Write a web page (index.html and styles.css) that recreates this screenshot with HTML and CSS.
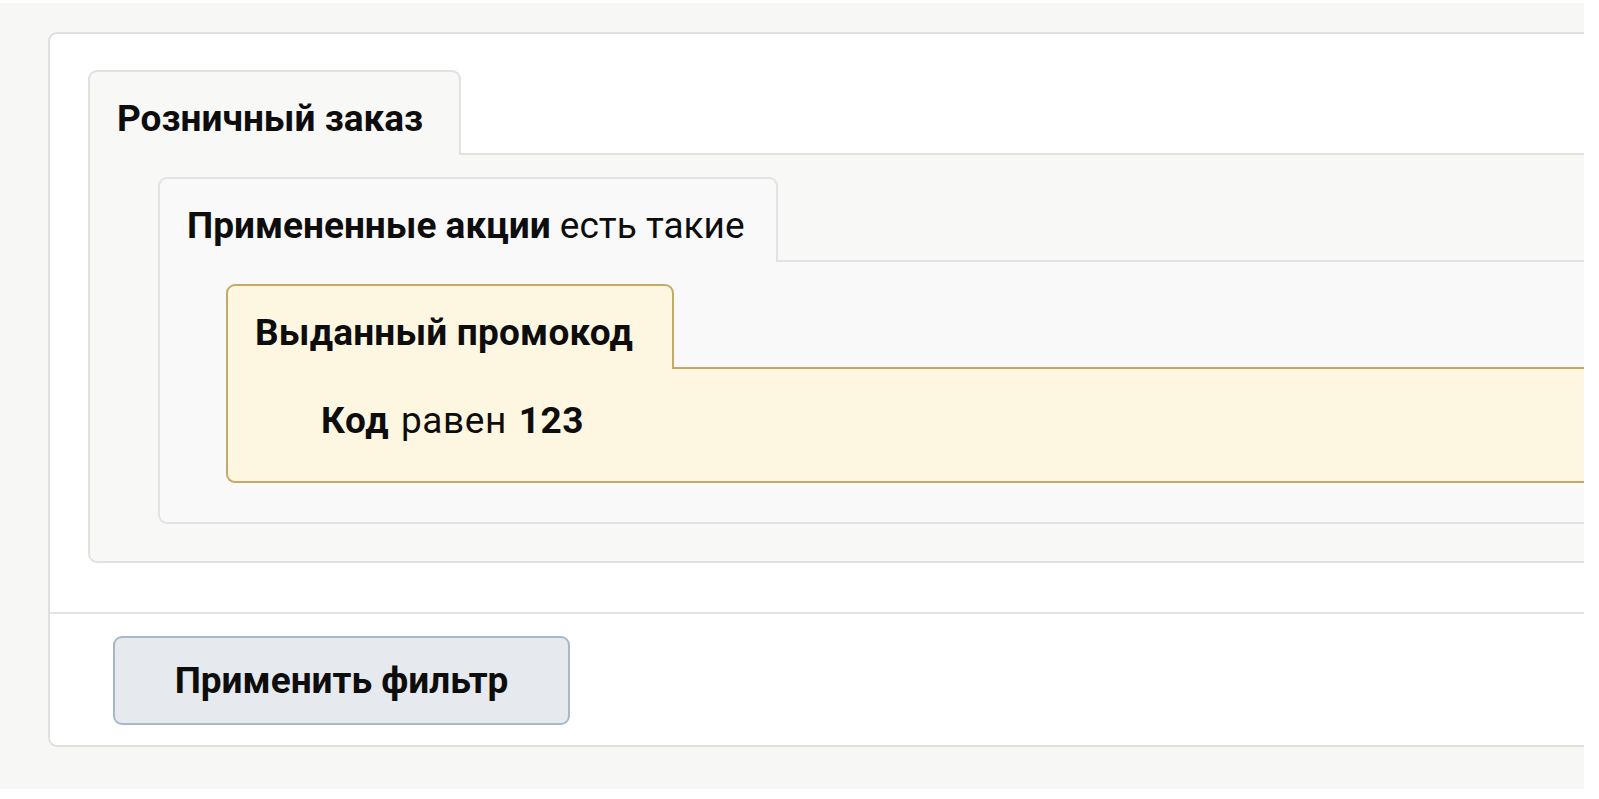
FILE: index.html
```html
<!DOCTYPE html>
<html lang="ru">
<head>
<meta charset="utf-8">
<title>Фильтр</title>
<link rel="stylesheet" href="styles.css">
</head>
<body>
<div class="frame">
  <div class="panel">
    <div class="panel-main">
      <div class="group group-order">
        <div class="group-head">
          <div class="tab tab-order"><b>Розничный заказ</b></div>
          <div class="tab-fill"></div>
        </div>
        <div class="group-body body-order">
          <div class="group group-promo">
            <div class="group-head">
              <div class="tab tab-promo"><b>Примененные акции</b> есть такие</div>
              <div class="tab-fill"></div>
            </div>
            <div class="group-body body-promo">
              <div class="group group-code">
                <div class="group-head">
                  <div class="tab tab-code"><b>Выданный промокод</b></div>
                  <div class="tab-fill"></div>
                </div>
                <div class="group-body body-code">
                  <b>Код</b> равен <b>123</b>
                </div>
              </div>
            </div>
          </div>
        </div>
      </div>
    </div>
    <div class="panel-footer">
      <button class="btn" type="button">Применить фильтр</button>
    </div>
  </div>
</div>
</body>
</html>
```

FILE: styles.css
```css
html, body {
  margin: 0;
  padding: 0;
  background: #ffffff;
}

body {
  font-family: Roboto, "Noto Sans", "DejaVu Sans", sans-serif;
  color: #0d0d0d;
  font-size: 37px;
  line-height: 40px;
}

b {
  font-weight: 700;
}

.frame {
  width: 1584px;
  height: 786px;
  margin-top: 3px;
  background: #f7f7f5;
  overflow: hidden;
  box-sizing: border-box;
  padding: 29px 0 0 48px;
}

.panel {
  width: 1700px;
  height: 715px;
  box-sizing: border-box;
  background: #ffffff;
  border: 2px solid #e0e0df;
  border-radius: 9px;
  display: flex;
  flex-direction: column;
}

.panel-main {
  padding: 36px 0 0 38px;
  height: 578px;
  box-sizing: border-box;
}

.group-head {
  display: flex;
  align-items: flex-end;
}

.tab {
  height: 85px;
  box-sizing: border-box;
  padding: 27px 0 0 27px;
  border: 2px solid;
  border-bottom: none;
  border-radius: 9px 9px 0 0;
  white-space: nowrap;
}

.tab-fill {
  flex: 1;
  border-bottom: 2px solid;
}

.group-body {
  border: 2px solid;
  border-top: none;
  border-radius: 0 0 9px 9px;
}

.group-order .tab,
.group-order .body-order {
  background: #f8f8f7;
  border-color: #e1e1e0;
}
.group-order > .group-head > .tab-fill {
  border-color: #e1e1e0;
}

.tab-order {
  width: 373px;
}

.body-order {
  padding: 22px 0 37px 68px;
}

.group-promo .tab,
.group-promo .body-promo {
  background: #f9f9f9;
  border-color: #e3e3e3;
}
.group-promo > .group-head > .tab-fill {
  border-color: #e3e3e3;
}

.tab-promo {
  width: 620px;
}

.body-promo {
  padding: 22px 0 39px 66px;
}

.group-code .tab,
.group-code .body-code {
  background: #fdf7e1;
  border-color: #c5a966;
}
.group-code > .group-head > .tab-fill {
  border-color: #c5a966;
}

.tab-code {
  width: 448px;
  letter-spacing: 0.2px;
}

.body-code {
  padding: 32px 0 40px 93px;
  letter-spacing: 0.6px;
  word-spacing: 2px;
}

.panel-footer {
  border-top: 2px solid #e3e3e3;
  padding: 22px 0 0 63px;
}

.btn {
  width: 457px;
  height: 89px;
  box-sizing: border-box;
  background: #e6e9ed;
  border: 2px solid #a9b8c8;
  border-radius: 9px;
  font-family: inherit;
  font-size: 37px;
  font-weight: 700;
  color: #0d0d0d;
  padding: 0;
  cursor: pointer;
}
```
